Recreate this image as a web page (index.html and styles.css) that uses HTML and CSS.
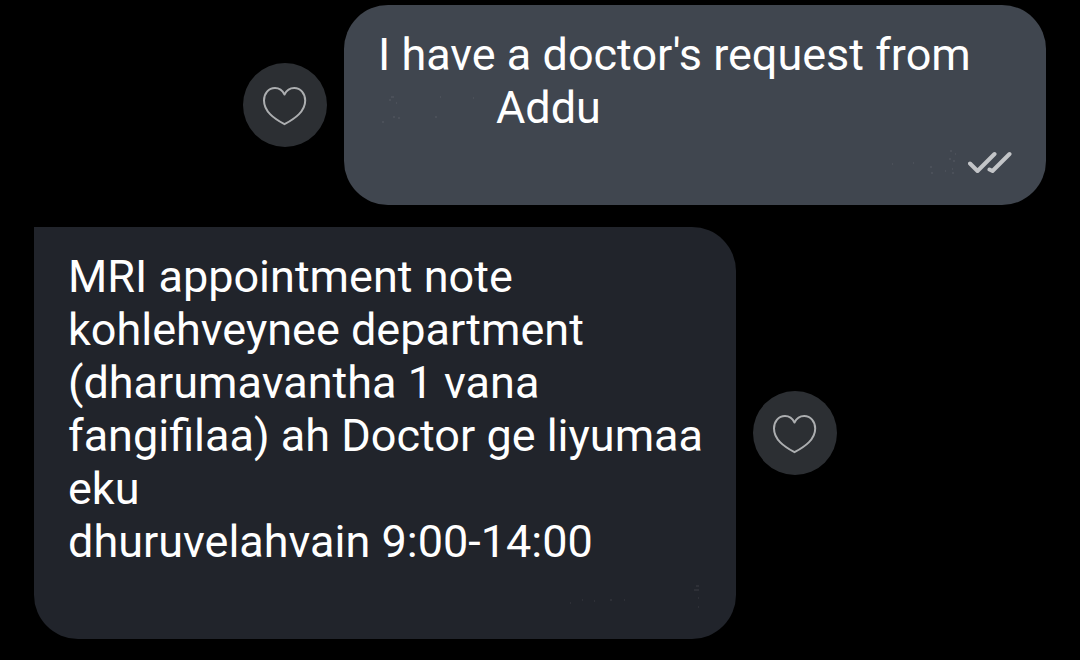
FILE: index.html
```html
<!DOCTYPE html>
<html lang="en">
<head>
<meta charset="utf-8">
<meta name="viewport" content="width=device-width, initial-scale=1">
<title>Chat</title>
<link rel="stylesheet" href="styles.css">
</head>
<body>
<main class="chat">
  <article class="message message-sent">
    <button class="react" type="button" aria-label="React to sent message">
      <svg class="heart" viewBox="0 0 84 84" aria-hidden="true"><path d="M41.500 31.500C39.500 27.500 36 25 32 25C25.500 25 21 30.500 21 37.500C21 48.500 31 55.500 41.500 61.200C52 55.500 62.200 48.500 62.200 37.500C62.200 30.500 57.500 25 51.200 25C47 25 43.500 27.500 41.500 31.500Z"/></svg>
    </button>
    <div class="bubble">
      <p class="text">I have a doctor's request from <svg class="hidden-name" viewBox="0 0 118 40" aria-hidden="true"><path d="M13 8h3M11 11h2M18 14h1M4 33h2M15 28h2M20 29h2M57 28h2M62 8h1M95 9h1"/></svg>Addu</p>
      <div class="meta">
        <svg class="hidden-time" viewBox="0 0 72 28" aria-hidden="true"><path d="M62 5h2M67 8h1M61 13h2M65 15h2M42 21h2M43 27h2M57 25h1M64 23h1M64 27h2M25 17h1M4 18h1"/></svg>
        <svg class="checks" viewBox="0 0 46 24" role="img" aria-label="Read"><path d="M2 13.500L9.500 21L26.500 4M21.500 19.500L24.500 21L41.500 4"/></svg>
      </div>
    </div>
  </article>
  <article class="message message-received">
    <div class="bubble">
      <p class="text">MRI appointment note kohlehveynee department (dharumavantha 1 vana fangifilaa) ah Doctor ge liyumaa eku<br>dhuruvelahvain 9:00-14:00</p>
      <div class="meta">
        <svg class="hidden-time hidden-time-wide" viewBox="0 0 140 28" aria-hidden="true"><path d="M132 6h3M130 10h5M134 18h1M134 27h1M6 23h1M18 20h1M30 21h1M46 20h2M60 20h1"/></svg>
      </div>
    </div>
    <button class="react" type="button" aria-label="React to received message">
      <svg class="heart" viewBox="0 0 84 84" aria-hidden="true"><path d="M41.500 31.500C39.500 27.500 36 25 32 25C25.500 25 21 30.500 21 37.500C21 48.500 31 55.500 41.500 61.200C52 55.500 62.200 48.500 62.200 37.500C62.200 30.500 57.500 25 51.200 25C47 25 43.500 27.500 41.500 31.500Z"/></svg>
    </button>
  </article>
</main>
</body>
</html>
```
FILE: styles.css
```css
* {
  box-sizing: border-box;
}

body {
  margin: 0;
  background: #000;
  color: #fff;
  font-family: Roboto, "Liberation Sans", sans-serif;
}

.chat {
  display: flex;
  flex-direction: column;
  gap: 22px;
  padding: 5px 34px 21px;
}

.message {
  display: flex;
  align-items: center;
  gap: 17px;
}

.message-sent {
  justify-content: flex-end;
}

.bubble {
  width: 702px;
  max-width: calc(100% - 101px);
  padding: 23px 32px 31px 34px;
  border-radius: 44px;
}

.message-sent .bubble {
  background: #40464f;
}

.message-received .bubble {
  background: #21242b;
  border-top-left-radius: 0;
}

.text {
  margin: 0;
  font-size: 45px;
  line-height: 53px;
}

.meta {
  display: flex;
  justify-content: flex-end;
  align-items: flex-end;
  gap: 8px;
  height: 40px;
}

.react {
  flex: none;
  width: 84px;
  height: 84px;
  padding: 0;
  border: 0;
  border-radius: 50%;
  background: #2c2f33;
  cursor: pointer;
}

.heart {
  display: block;
  fill: none;
  stroke: #acaeb0;
  stroke-width: 2;
  stroke-linejoin: round;
}

.checks {
  width: 46px;
  height: 24px;
  fill: none;
  stroke: #c3c5c8;
  stroke-width: 4;
  stroke-linecap: round;
  stroke-linejoin: round;
}

.hidden-name {
  width: 118px;
  height: 40px;
  vertical-align: -6px;
}

.hidden-time {
  width: 72px;
  height: 28px;
}

.hidden-time-wide {
  width: 140px;
}

.hidden-name,
.hidden-time {
  fill: none;
  stroke: #fff;
  stroke-opacity: 0.12;
  stroke-width: 1;
}
```
